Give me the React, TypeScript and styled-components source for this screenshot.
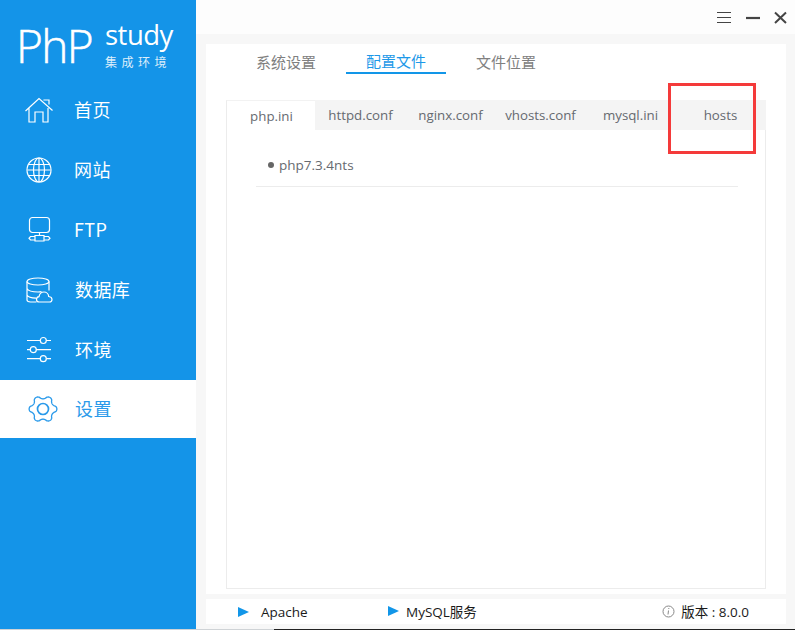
import React from "react";
import styled, { createGlobalStyle } from "styled-components";

const Global = createGlobalStyle`
  html, body { margin: 0; padding: 0; background: #fff; }
  #root { width: 795px; height: 630px; overflow: hidden; }
  * { box-sizing: border-box; }
`;
const FONT = `"Noto Sans CJK SC", "Open Sans", sans-serif`;
const LATIN = `"Open Sans", "Noto Sans CJK SC", sans-serif`;

const Shell = styled.div`
  width: 795px; height: 630px; display: flex; flex-direction: column; font-family: ${FONT}; position: relative;
`;
const Columns = styled.div`flex: 1; display: flex; min-height: 0;`;
const BottomEdge = styled.div`
  height: 1px; flex: none; background: linear-gradient(90deg, #cfd3d6 0 274px, #222 274px);
`;
const Sidebar = styled.aside`
  width: 196px; flex: none; background: #1494e8; display: flex; flex-direction: column;
`;
const Logo = styled.div`
  height: 80px; padding: 20px 0 0 16px; display: flex; color: #fff; font-family: ${LATIN};
`;
const LogoPhp = styled.div`
  font-size: 46px; line-height: 50px; font-weight: 300; letter-spacing: -1.6px; -webkit-text-stroke: .5px #fff; width: 89px; flex: none;
`;
const LogoSide = styled.div`display: flex; flex-direction: column; align-items: flex-start;`;
const LogoStudy = styled.div`font-size: 27.5px; line-height: 30px; font-weight: 400; letter-spacing: -.5px;`;
const LogoSub = styled.div`font-size: 12px; line-height: 14px; letter-spacing: 4.5px; margin: 5px 0 0 0; font-family: ${FONT}; opacity: .85;`;
const Nav = styled.nav`display: flex; flex-direction: column;`;
const NavItem = styled.div<{ $active?: boolean; $indent: number; $pad?: number }>`
  height: ${p => (p.$active ? 58 : 60)}px; display: flex; align-items: center; padding-left: ${p => p.$pad ?? 24}px;
  background: ${p => (p.$active ? "#fff" : "transparent")};
  color: ${p => (p.$active ? "#2a9aea" : "#fff")};
  font-size: 18px;
  & > span { margin: -2px 0 0 ${p => p.$indent}px; letter-spacing: .4px; }
  & > svg { width: 30px; height: 30px; flex: none; fill: none; stroke: currentColor; stroke-width: 1.2; }
`;
const Main = styled.main`flex: 1; display: flex; flex-direction: column; min-width: 0;`;
const TitleBar = styled.div`
  height: 34px; flex: none; background: #fdfdfd; display: flex; justify-content: flex-end; align-items: flex-start; padding: 11px 8px 0 0;
  & > svg { display: block; margin-left: 13px; }
`;
const Body = styled.div`flex: 1; background: #f7f7f7; padding: 10px 9px 5px 10px; display: flex; flex-direction: column; gap: 5px; min-height: 0;`;
const Panel = styled.section`flex: 1; background: #fff; padding: 0 20px 5px 20px; display: flex; flex-direction: column; min-height: 0;`;
const TopTabs = styled.div`display: flex; height: 56px; padding: 0 0 0 10px; gap: 10px; flex: none;`;
const TopTab = styled.div<{ $active?: boolean }>`
  width: 100px; height: 30px; text-align: center; font-size: 15px; line-height: ${p => (p.$active ? 34 : 36)}px;
  color: ${p => (p.$active ? "#1c98e8" : "#808080")};
  border-bottom: 2px solid ${p => (p.$active ? "#1296e8" : "transparent")};
`;
const Card = styled.div`flex: 1; border: 1px solid #ececec; border-top: 0; display: flex; flex-direction: column;`;
const FileTabs = styled.div`display: flex; height: 30px; background: #f4f4f4; flex: none; margin: 0 -1px;`;
const FileTab = styled.div<{ $w: number; $active?: boolean }>`
  width: ${p => p.$w}px; text-align: center; font-family: ${LATIN}; font-size: 13.3px; line-height: 31px; color: #666a70; padding-left: 1px;
  background: ${p => (p.$active ? "#fff" : "transparent")};
  ${p => (p.$active ? "border-left: 1px solid #ececec; border-top: 1px solid #f2f2f2;" : "")}
`;
const FileList = styled.div`padding: 0 27px 0 29px;`;
const FileRow = styled.div`
  height: 57px; border-bottom: 1px solid #ececec; font-family: ${LATIN}; font-size: 13.5px; line-height: 20px; color: #666a70;
  padding: 14px 0 0 12px; display: flex; align-items: center; gap: 5px;
`;
const Dot = styled.i`width: 6px; height: 6px; border-radius: 50%; background: #666; display: block;`;
const Highlight = styled.div`
  position: absolute; left: 668px; top: 83px; width: 88px; height: 71px; border: 3px solid #f43a3a; pointer-events: none;
`;
const Status = styled.footer`
  height: 25px; flex: none; background: #fff; display: flex; align-items: center; font-size: 13.5px; line-height: 20px; color: #1a1a1a; font-family: ${LATIN}; padding-left: 32px;
`;
const Service = styled.div<{ $w: number; $gap: number }>`
  width: ${p => p.$w}px; display: flex; align-items: center; gap: ${p => p.$gap}px; flex: none;
`;
const Play = styled.i<{ $lift?: boolean }>`
  width: 0; height: 0; display: block; border-left: 11px solid #1296e8; border-top: 5.5px solid transparent; border-bottom: 5.5px solid transparent;
  margin-top: ${p => (p.$lift ? -2 : 0)}px;
`;
const Version = styled.div`margin-left: auto; padding-right: 37px; display: flex; align-items: center; gap: 6px; font-size: 13.5px;`;

const Home = () => (
  <svg viewBox="0 0 30 30"><path d="M1.500 16 15 3.500 28.500 15.500M5 13v14h6V17h8v10h5V13M20 5.500V5h5v4.500" /></svg>
);
const Globe = () => (
  <svg viewBox="0 0 30 30" strokeWidth="1">
    <circle cx="15" cy="15" r="12" />
    <ellipse cx="15" cy="15" rx="5.500" ry="12" />
    <path d="M15 3v24M3.500 15h23M5 9.500h20M5 20.500h20" />
  </svg>
);
const Ftp = () => (
  <svg viewBox="0 0 30 30">
    <rect x="5.500" y="2.500" width="20" height="15" rx="3" />
    <path d="M15.500 17.500V20.500M11 20.500h9v5.500h-9zM11 21.500H6.500L5 23.200l1.500 1.800H11M20 21.500h4.500l1.500 1.700-1.500 1.800H20" />
  </svg>
);
const Db = () => (
  <svg viewBox="0 0 30 30">
    <ellipse cx="14" cy="6.500" rx="11" ry="3.500" />
    <path d="M3 6.500v18.500c0 1 1.500 1.800 3.500 2h6M25 6.500v9M3 13.500c1 2 6 3.500 11 3.500 1.500 0 2.500-.1 3.500-.3M3 20c1 1.800 5 3 9 3.200" />
    <path d="M15.500 27c-2 0-3-1.200-3-2.600 0-1.500 1-2.500 2.500-2.700C15.500 19 17.500 17 20 17c2.500 0 4.500 2 4.700 4.500 1.800.2 3.300 1.500 3.300 3 0 1.400-1 2.500-2.500 2.500z" />
  </svg>
);
const Sliders = () => (
  <svg viewBox="0 0 30 30">
    <path d="M3 5.500h13.300M22.300 5.500H27M3 14.700h3.300M12.300 14.700H27M3 23.700h13.300M22.300 23.700H27" />
    <circle cx="19.300" cy="5.500" r="3" /><circle cx="9.300" cy="14.700" r="3" /><circle cx="19.300" cy="23.700" r="3" />
  </svg>
);
const gearPath = (() => {
  const pts: string[] = [];
  for (let i = 0; i < 180; i++) {
    const t = (i / 180) * Math.PI * 2;
    const c = Math.cos(6 * t);
    const r = 12 + 1.6 * Math.sign(c) * Math.pow(Math.abs(c), 0.7);
    pts.push(`${(15 + r * Math.cos(t) * 1.02).toFixed(2)} ${(15 + r * Math.sin(t) * 0.98).toFixed(2)}`);
  }
  return `M${pts.join("L")}Z`;
})();
const Gear = () => (
  <svg viewBox="0 0 30 30">
    <path d={gearPath} strokeWidth="1.300" />
    <circle cx="15" cy="15" r="5.500" strokeWidth="1.700" />
  </svg>
);

const files: [string, number][] = [["php.ini", 89], ["httpd.conf", 90], ["nginx.conf", 90], ["vhosts.conf", 90], ["mysql.ini", 90], ["hosts", 90]];

export default function App() {
  return (
    <Shell>
      <Global />
      <Columns>
        <Sidebar>
          <Logo>
            <LogoPhp>PhP</LogoPhp>
            <LogoSide>
              <LogoStudy>study</LogoStudy>
              <LogoSub>集成环境</LogoSub>
            </LogoSide>
          </Logo>
          <Nav>
            <NavItem $indent={20}><Home /><span>首页</span></NavItem>
            <NavItem $indent={20}><Globe /><span>网站</span></NavItem>
            <NavItem $indent={20}><Ftp /><span>FTP</span></NavItem>
            <NavItem $indent={21}><Db /><span>数据库</span></NavItem>
            <NavItem $indent={21}><Sliders /><span>环境</span></NavItem>
            <NavItem $indent={17} $pad={28} $active><Gear /><span>设置</span></NavItem>
          </Nav>
        </Sidebar>
        <Main>
          <TitleBar>
            <svg width="16" height="14" viewBox="0 0 16 14" stroke="#444" strokeWidth="1"><path d="M2 1.500h14M2 6.500h14M2 11.500h14" /></svg>
            <svg width="16" height="14" viewBox="0 0 16 14" stroke="#444" strokeWidth="2.200"><path d="M2 7h14" /></svg>
            <svg width="14" height="14" viewBox="0 0 14 14" stroke="#444" strokeWidth="2"><path d="M2 1.500l11 10.500M13 1.500 2 12" /></svg>
          </TitleBar>
          <Body>
            <Panel>
              <TopTabs>
                <TopTab>系统设置</TopTab>
                <TopTab $active>配置文件</TopTab>
                <TopTab>文件位置</TopTab>
              </TopTabs>
              <Card>
                <FileTabs>
                  {files.map(([name, w], i) => <FileTab key={name} $w={w} $active={i === 0}>{name}</FileTab>)}
                </FileTabs>
                <FileList>
                  <FileRow><Dot />php7.3.4nts</FileRow>
                </FileList>
              </Card>
            </Panel>
            <Status>
              <Service $w={150} $gap={12}><Play />Apache</Service>
              <Service $w={150} $gap={7}><Play $lift />MySQL服务</Service>
              <Version>
                <svg width="13" height="13" viewBox="0 0 13 13" fill="none" stroke="#888"><circle cx="6.500" cy="6.500" r="5.500" /><path d="M6.800 3v1M6.500 5.500 6 9.500" /></svg>
                版本 : 8.0.0
              </Version>
            </Status>
          </Body>
        </Main>
      </Columns>
      <BottomEdge />
      <Highlight />
    </Shell>
  );
}
